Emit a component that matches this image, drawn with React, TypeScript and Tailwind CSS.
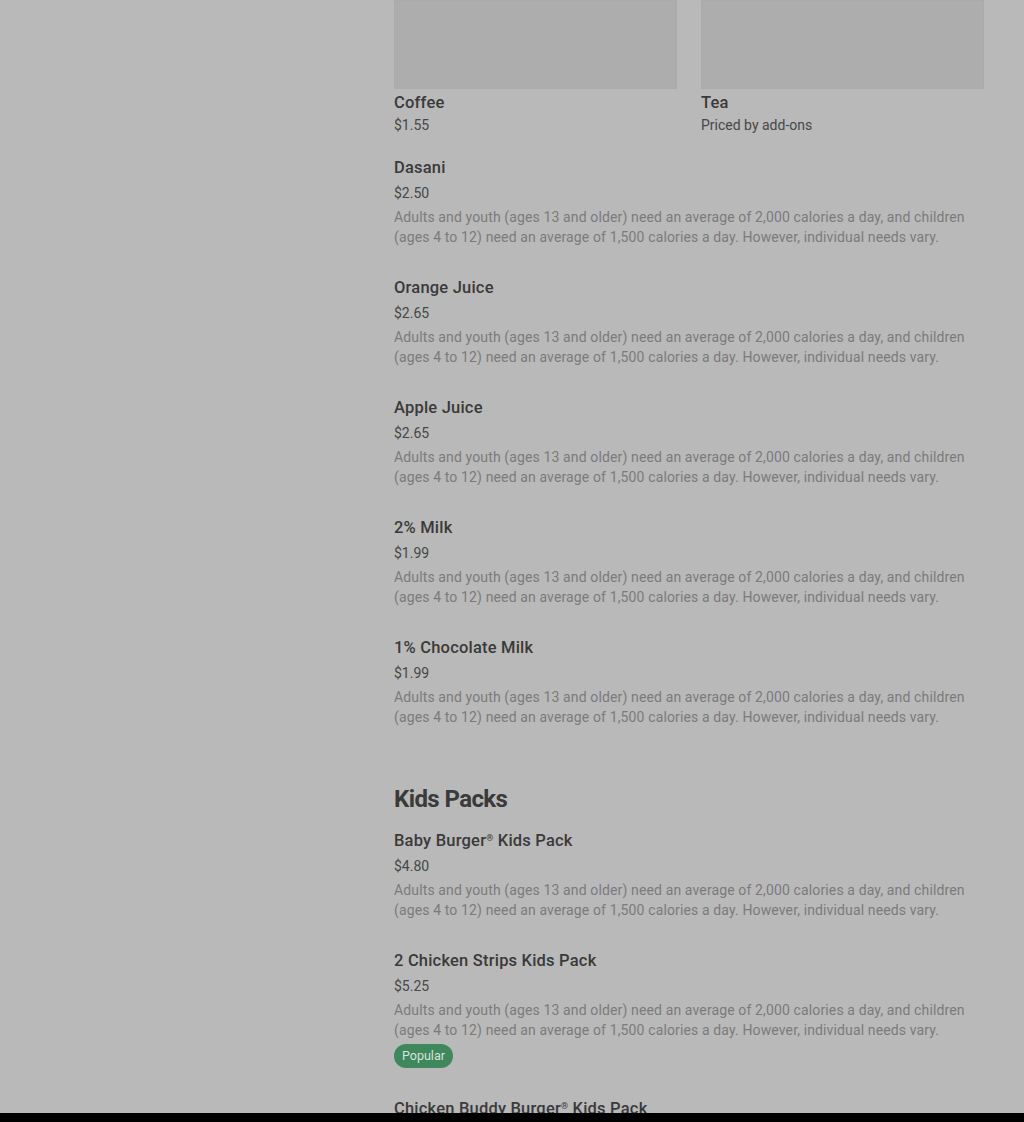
const DESC =
  "Adults and youth (ages 13 and older) need an average of 2,000 calories a day, and children (ages 4 to 12) need an average of 1,500 calories a day. However, individual needs vary.";

type Item = { name: string; price: string; popular?: boolean };

const drinks: Item[] = [
  { name: "Dasani", price: "$2.50" },
  { name: "Orange Juice", price: "$2.65" },
  { name: "Apple Juice", price: "$2.65" },
  { name: "2% Milk", price: "$1.99" },
  { name: "1% Chocolate Milk", price: "$1.99" },
];

const kids: Item[] = [
  { name: "Baby Burger® Kids Pack", price: "$4.80" },
  { name: "2 Chicken Strips Kids Pack", price: "$5.25", popular: true },
  { name: "Chicken Buddy Burger® Kids Pack", price: "$5.25" },
];

// registered mark is drawn small and raised, as in the menu font
function Name({ text }: { text: string }) {
  const parts = text.split("®");
  return (
    <>
      {parts.map((p, i) => (
        <span key={i}>
          {p}
          {i < parts.length - 1 && (
            <span className="relative -top-[5px] text-[9px] leading-none">®</span>
          )}
        </span>
      ))}
    </>
  );
}

function MenuRow({ item }: { item: Item }) {
  return (
    <div className="pb-[29px]">
      <p className="h-6 text-[16.5px] leading-6 font-medium tracking-[0.2px] text-[#3a3a3a]">
        <Name text={item.name} />
      </p>
      <p className="mt-[3px] text-[14px] leading-5 text-[#474747]">{item.price}</p>
      <p className="mt-1 text-[14px] leading-5 tracking-[0.13px] text-[#7b7b7b]">{DESC}</p>
      {item.popular && (
        <span className="mt-1 inline-flex h-6 items-center rounded-full bg-[#3f875c] px-2 text-[12.5px] text-[#d6e4da]">
          Popular
        </span>
      )}
    </div>
  );
}

export default function App() {
  return (
    <div
      className="min-h-screen bg-[#b9b9b9]"
      style={{ fontFamily: "Roboto, 'Noto Sans', sans-serif" }}
    >
      <div className="ml-[394px] w-[590px]">
        <div className="grid grid-cols-2 gap-6">
          <div>
            <div className="h-[89px] border border-[#aaaaaa] bg-[#adadad]" />
            <p className="mt-[2px] text-[16.5px] leading-6 font-medium tracking-[0.2px] text-[#3a3a3a]">Coffee</p>
            <p className="text-[14px] leading-5 text-[#474747]">$1.55</p>
          </div>
          <div>
            <div className="h-[89px] border border-[#aaaaaa] bg-[#adadad]" />
            <p className="mt-[2px] text-[16.5px] leading-6 font-medium tracking-[0.2px] text-[#3a3a3a]">Tea</p>
            <p className="text-[14px] leading-5 text-[#474747]">Priced by add-ons</p>
          </div>
        </div>

        <div className="mt-[21px]">
          {drinks.map((d) => (
            <MenuRow key={d.name} item={d} />
          ))}
        </div>

        <h2 className="mt-[27px] text-[24px] leading-8 font-bold tracking-tight text-[#3a3a3a]">
          Kids Packs
        </h2>
        <div className="mt-[14px]">
          {kids.map((d) => (
            <MenuRow key={d.name} item={d} />
          ))}
        </div>
      </div>
      <div className="fixed inset-x-0 bottom-0 h-[9px] bg-black" />
    </div>
  );
}
